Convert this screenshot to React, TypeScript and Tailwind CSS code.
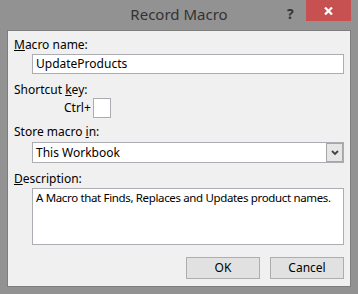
const font = { fontFamily: '"Noto Sans", "Open Sans", sans-serif' };

function Label({ children }: { children: React.ReactNode }) {
  return <div className="pl-[6px] text-[12px] leading-4 text-[#000]">{children}</div>;
}

export default function App() {
  return (
    <div className="w-[358px] h-[294px] bg-[#929292] flex flex-col" style={font}>
      {/* title bar */}
      <div className="relative h-[30px] flex items-center justify-center">
        <span className="text-[15px] text-[#333] pb-[2px]">Record Macro</span>
        <span className="absolute left-[287px] top-[3px] text-[14px] font-bold text-[#333]">?</span>
        <div className="absolute left-[306px] top-0 w-[45px] h-[21px] bg-[#c75050] flex items-center justify-center">
          <svg width="9" height="8" viewBox="0 0 9 8">
            <path d="M1 0.5 L8 7.5 M8 0.5 L1 7.5" stroke="#fff" strokeWidth="2.2" />
          </svg>
        </div>
      </div>

      {/* body */}
      <div className="mx-[7px] mb-[7px] flex-1 border border-[#7e7e7e] bg-[#f0f0f0] pt-[6px] pr-[6px] flex flex-col">
        <Label>
          <u>M</u>acro name:
        </Label>
        <div className="ml-[24px] mt-[1px] h-[20px] border border-[#abadb3] bg-white px-[3px] text-[12px] leading-[18px]">
          UpdateProducts
        </div>

        <div className="mt-[8px]">
          <Label>
            Shortcut <u>k</u>ey:
          </Label>
        </div>
        <div className="flex items-center h-[20px] pl-[56px] gap-[2px]">
          <span className="text-[12px] leading-4">Ctrl+</span>
          <div className="w-[18px] h-[20px] border border-[#abadb3] bg-white" />
        </div>

        <div className="mt-[6px]">
          <Label>
            Store macro <u>i</u>n:
          </Label>
        </div>
        <div className="ml-[24px] mt-[2px] h-[21px] border border-[#abadb3] bg-white flex">
          <div className="flex-1 px-[3px] text-[12px] leading-[19px]">This Workbook</div>
          <div className="w-[17px] border border-[#a6a6a6] bg-[#e6e6e6] flex items-center justify-center">
            <svg width="8" height="6" viewBox="0 0 8 6">
              <path d="M1 1 L4 4 L7 1" fill="none" stroke="#444" strokeWidth="1.8" />
            </svg>
          </div>
        </div>

        <div className="mt-[8px]">
          <Label>
            <u>D</u>escription:
          </Label>
        </div>
        <div className="ml-[24px] mt-[1px] h-[57px] border border-[#abadb3] bg-white px-[3px] pt-[1px] text-[11.5px] leading-4 tracking-[-0.35px] whitespace-nowrap">
          A Macro that Finds, Replaces and Updates product names.
        </div>

        <div className="mt-[12px] flex justify-end gap-[10px]">
          <button className="w-[74px] h-[22px] border border-[#adadad] bg-[#e1e1e1] text-[12px] leading-4">
            OK
          </button>
          <button className="w-[74px] h-[22px] border border-[#adadad] bg-[#e1e1e1] text-[12px] leading-4">
            Cancel
          </button>
        </div>
      </div>
    </div>
  );
}
